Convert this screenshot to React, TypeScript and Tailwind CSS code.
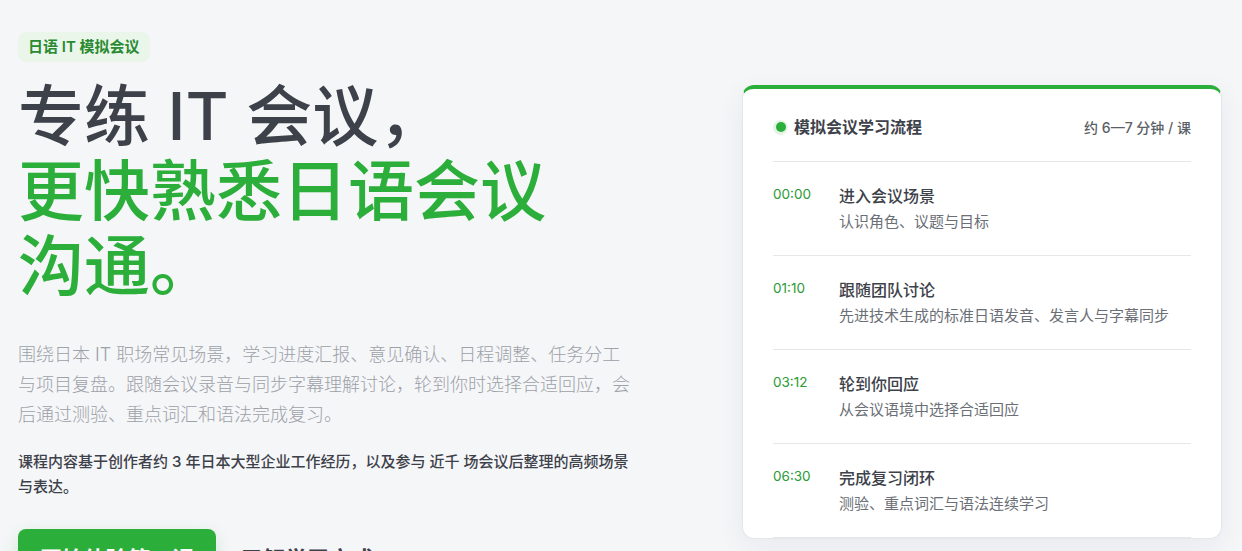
import React from 'react'

const steps = [
  { time: '00:00', title: '进入会议场景', desc: '认识角色、议题与目标' },
  { time: '01:10', title: '跟随团队讨论', desc: '先进技术生成的标准日语发音、发言人与字幕同步' },
  { time: '03:12', title: '轮到你回应', desc: '从会议语境中选择合适回应' },
  { time: '06:30', title: '完成复习闭环', desc: '测验、重点词汇与语法连续学习' },
]

export default function App() {
  return (
    <div
      className="min-h-screen bg-[#f5f6f8] text-[#3d4149] overflow-hidden"
      style={{ fontFamily: 'Inter, "Noto Sans CJK SC", "Noto Sans", sans-serif' }}
    >
      <div className="flex justify-between pl-[18px] pr-[20px] pt-[32px]">
        <section className="w-[630px] shrink-0">
          <span className="inline-flex items-center h-[30px] px-[10px] rounded-lg bg-[#eaf6ea] text-[15px] font-semibold text-[#2a8a31]">
            日语 IT 模拟会议
          </span>

          <h1 className="mt-[17px] text-[66px] leading-[75px] font-medium">
            <span className="block text-[#3d4149]">专练 IT 会议，</span>
            <span className="block text-[#2cae3a]">更快熟悉日语会议</span>
            <span className="block text-[#2cae3a]">沟通。</span>
          </h1>

          <p className="mt-[36px] w-[615px] text-[18px] leading-[30px] font-light text-[#9da1a8]">
            围绕日本 IT 职场常见场景，学习进度汇报、意见确认、日程调整、任务分工与项目复盘。跟随会议录音与同步字幕理解讨论，轮到你时选择合适回应，会后通过测验、重点词汇和语法完成复习。
          </p>

          <p className="mt-[19px] w-[620px] text-[15px] leading-[25px] font-medium text-[#3d4149]">
            课程内容基于创作者约 3 年日本大型企业工作经历，以及参与 近千 场会议后整理的高频场景与表达。
          </p>

          <div className="mt-[30px] flex items-center gap-[25px]">
            <button className="h-[60px] px-[22px] rounded-lg bg-[#2cae3a] text-white text-[22px] font-bold shadow-[0_6px_18px_rgba(44,174,58,0.2)]">
              开始体验第一课
            </button>
            <button className="h-[60px] text-[22px] font-bold text-[#3d4149]">了解学习方式</button>
          </div>
        </section>

        <aside className="mt-[53px] w-[480px] shrink-0 self-start rounded-[12px] border border-[#e4e6ea] border-t-[4px] border-t-[#2cae3a] bg-white px-[30px] shadow-[0_8px_30px_rgba(30,40,60,0.06)]">
          <div className="flex items-center justify-between h-[73px] pt-[4px] border-b border-[#e5e7eb]">
            <div className="flex items-center gap-[6px]">
              <span className="flex items-center justify-center w-[15px] h-[15px] rounded-full bg-[#e3f4e4]">
                <span className="w-[10px] h-[10px] rounded-full bg-[#2cae3a]" />
              </span>
              <span className="text-[16px] font-semibold text-[#3d4149]">模拟会议学习流程</span>
            </div>
            <span className="text-[14px] font-medium text-[#5b5f66]">约 6—7 分钟 / 课</span>
          </div>

          {steps.map((s) => (
            <div key={s.time} className="flex h-[94px] pt-[21px] border-b border-[#e5e7eb]">
              <span className="w-[66px] shrink-0 text-[13.5px] leading-[22px] text-[#2a9a34]">
                {s.time}
              </span>
              <div>
                <div className="text-[16px] leading-[24px] font-medium text-[#3d4149] mt-[1px]">{s.title}</div>
                <div className="mt-[3px] text-[15px] leading-[22px] text-[#6b6f76]">{s.desc}</div>
              </div>
            </div>
          ))}
        </aside>
      </div>
    </div>
  )
}
